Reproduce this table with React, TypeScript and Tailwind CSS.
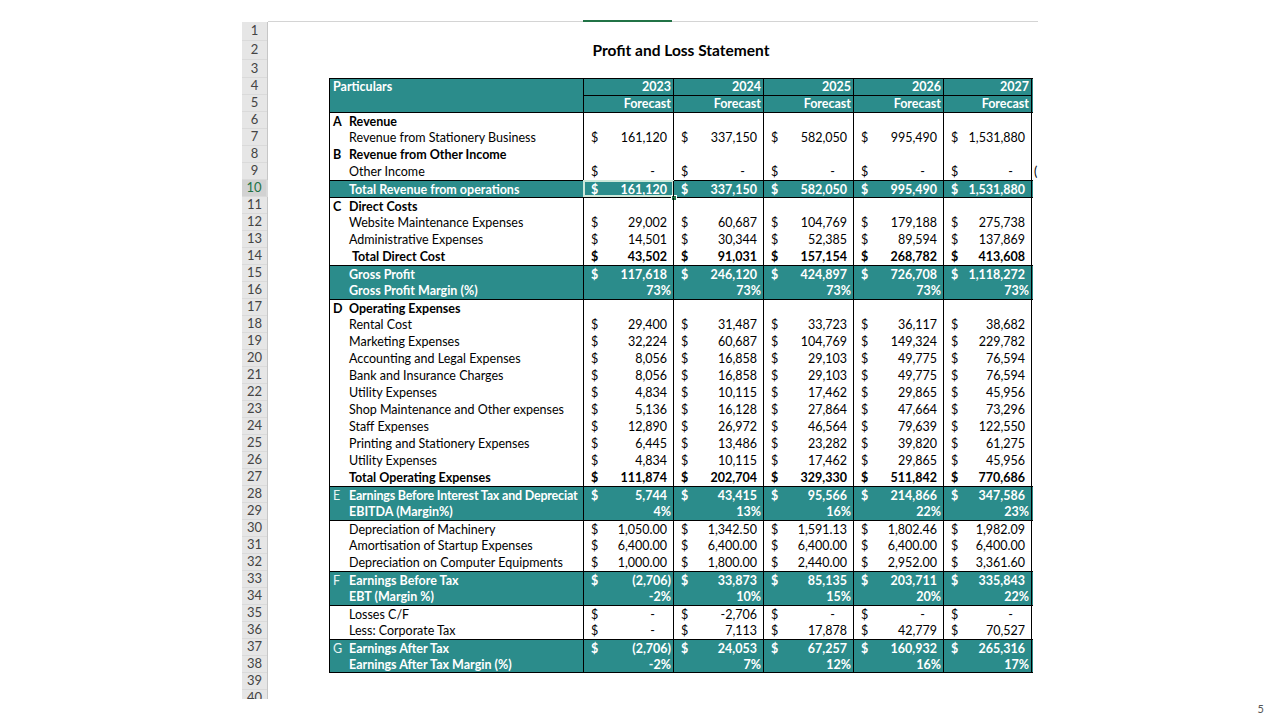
import React from "react";

type Kind = "normal" | "bold" | "section" | "teal";
type Row = {
  n: number;
  letter?: string;
  label: string;
  vals?: string[];
  kind?: Kind;
  top?: boolean;
  bottom?: boolean;
  indent?: boolean;
  pct?: boolean;
  sel?: boolean;
  tight?: boolean;
  overflow?: string;
};

const rows: Row[] = [
  { n: 6, letter: "A", label: "Revenue", kind: "section", top: true },
  { n: 7, label: "Revenue from Stationery Business", vals: ["161,120", "337,150", "582,050", "995,490", "1,531,880"] },
  { n: 8, letter: "B", label: "Revenue from Other Income", kind: "section" },
  { n: 9, label: "Other Income", vals: ["-", "-", "-", "-", "-"], overflow: "(" },
  { n: 10, label: "Total Revenue from operations", kind: "teal", top: true, sel: true, vals: ["161,120", "337,150", "582,050", "995,490", "1,531,880"] },
  { n: 11, letter: "C", label: "Direct Costs", kind: "section", top: true },
  { n: 12, label: "Website Maintenance Expenses", vals: ["29,002", "60,687", "104,769", "179,188", "275,738"] },
  { n: 13, label: "Administrative Expenses", vals: ["14,501", "30,344", "52,385", "89,594", "137,869"] },
  { n: 14, label: "Total Direct Cost", kind: "bold", indent: true, vals: ["43,502", "91,031", "157,154", "268,782", "413,608"] },
  { n: 15, label: "Gross Profit", kind: "teal", top: true, vals: ["117,618", "246,120", "424,897", "726,708", "1,118,272"] },
  { n: 16, label: "Gross Profit Margin (%)", kind: "teal", pct: true, vals: ["73%", "73%", "73%", "73%", "73%"] },
  { n: 17, letter: "D", label: "Operating Expenses", kind: "section", top: true },
  { n: 18, label: "Rental Cost", vals: ["29,400", "31,487", "33,723", "36,117", "38,682"] },
  { n: 19, label: "Marketing Expenses", vals: ["32,224", "60,687", "104,769", "149,324", "229,782"] },
  { n: 20, label: "Accounting and Legal Expenses", vals: ["8,056", "16,858", "29,103", "49,775", "76,594"] },
  { n: 21, label: "Bank and Insurance Charges", vals: ["8,056", "16,858", "29,103", "49,775", "76,594"] },
  { n: 22, label: "Utility Expenses", vals: ["4,834", "10,115", "17,462", "29,865", "45,956"] },
  { n: 23, label: "Shop Maintenance and Other expenses", vals: ["5,136", "16,128", "27,864", "47,664", "73,296"] },
  { n: 24, label: "Staff Expenses", vals: ["12,890", "26,972", "46,564", "79,639", "122,550"] },
  { n: 25, label: "Printing and Stationery Expenses", vals: ["6,445", "13,486", "23,282", "39,820", "61,275"] },
  { n: 26, label: "Utility Expenses", vals: ["4,834", "10,115", "17,462", "29,865", "45,956"] },
  { n: 27, label: "Total Operating Expenses", kind: "bold", vals: ["111,874", "202,704", "329,330", "511,842", "770,686"] },
  { n: 28, letter: "E", label: "Earnings Before Interest Tax and Depreciat", kind: "teal", top: true, tight: true, vals: ["5,744", "43,415", "95,566", "214,866", "347,586"] },
  { n: 29, label: "EBITDA (Margin%)", kind: "teal", pct: true, vals: ["4%", "13%", "16%", "22%", "23%"] },
  { n: 30, label: "Depreciation of Machinery", top: true, vals: ["1,050.00", "1,342.50", "1,591.13", "1,802.46", "1,982.09"] },
  { n: 31, label: "Amortisation of Startup Expenses", vals: ["6,400.00", "6,400.00", "6,400.00", "6,400.00", "6,400.00"] },
  { n: 32, label: "Depreciation on Computer Equipments", vals: ["1,000.00", "1,800.00", "2,440.00", "2,952.00", "3,361.60"] },
  { n: 33, letter: "F", label: "Earnings Before Tax", kind: "teal", top: true, vals: ["(2,706)", "33,873", "85,135", "203,711", "335,843"] },
  { n: 34, label: "EBT (Margin %)", kind: "teal", pct: true, vals: ["-2%", "10%", "15%", "20%", "22%"] },
  { n: 35, label: "Losses C/F", top: true, vals: ["-", "-2,706", "-", "-", "-"] },
  { n: 36, label: "Less: Corporate Tax", vals: ["-", "7,113", "17,878", "42,779", "70,527"] },
  { n: 37, letter: "G", label: "Earnings After Tax", kind: "teal", top: true, vals: ["(2,706)", "24,053", "67,257", "160,932", "265,316"] },
  { n: 38, label: "Earnings After Tax Margin (%)", kind: "teal", pct: true, bottom: true, vals: ["-2%", "7%", "12%", "16%", "17%"] },
];

const yearW = ["w-[90px]", "w-[90px]", "w-[90px]", "w-[90px]", "w-[89px]"];

function valPad(v: string) {
  if (v === "-") return "pr-[18px]";
  if (v.startsWith("(") || v.endsWith("%")) return "pr-[2px]";
  return "pr-[6px]";
}

function TableRow({ r }: { r: Row }) {
  const teal = r.kind === "teal";
  const bold = r.kind !== "normal" && r.kind !== undefined;
  return (
    <div
      className={`flex h-[17px] leading-[17px] ${teal ? "bg-[#2b8c8b] text-white" : "text-black"} ${
        r.top ? "border-t border-black leading-[16px]" : ""
      } ${r.bottom ? "border-b border-black" : ""}`}
    >
      <div className="w-[254px] border-l border-black flex overflow-hidden whitespace-nowrap">
        <span
          className={`w-[19px] shrink-0 pl-[3px] ${
            teal ? "text-[#e8f4f4] font-normal" : r.kind === "section" ? "font-bold" : ""
          }`}
        >
          {r.letter ?? ""}
        </span>
        <span
          className={`${bold ? "font-bold" : ""} ${r.indent ? "pl-[3px]" : ""} ${
            r.tight ? "tracking-[-0.2px]" : ""
          }`}
        >
          {r.label}
        </span>
      </div>
      {yearW.map((w, i) => {
        const v = r.vals?.[i];
        return (
          <div
            key={i}
            className={`${w} relative border-l border-black ${i === 4 ? "border-r" : ""} flex justify-between whitespace-nowrap`}
          >
            {v !== undefined ? (
              <>
                <span className={`pl-[7px] ${bold ? "font-bold" : ""}`}>{r.pct ? "" : "$"}</span>
                <span className={`${valPad(v)} ${bold ? "font-bold" : ""}`}>{v}</span>
              </>
            ) : null}
            {r.sel && i === 0 ? (
              <>
                <div className="absolute inset-x-[-1px] top-[-1px] bottom-0 border-2 border-[#cde8da]" />
                <div className="absolute right-[-4px] bottom-[-4px] w-[6px] h-[6px] bg-[#217346] border border-white" />
              </>
            ) : null}
            {r.overflow && i === 4 ? (
              <span className="absolute left-full ml-[3px] text-black">{r.overflow}</span>
            ) : null}
          </div>
        );
      })}
    </div>
  );
}

export default function App() {
  const rowNums: { n: number; h: string }[] = [];
  for (let i = 1; i <= 40; i++) {
    rowNums.push({ n: i, h: i === 1 || i === 2 ? "h-[19px]" : i === 3 ? "h-[18px]" : "h-[17px]" });
  }
  return (
    <div
      className="w-[1280px] h-[720px] bg-white overflow-hidden text-[12.5px]"
      style={{ fontFamily: "Lato, 'Open Sans', sans-serif" }}
    >
      <div className="h-[699px] overflow-hidden">
        <div className="h-[22px] pl-[268px] flex items-end">
          <div className="w-[770px] h-[1px] bg-[#d4d4d4] flex">
            <div className="ml-[315px] w-[89px] h-[2px] -mt-[1px] bg-[#217346]" />
          </div>
        </div>
        <div className="flex pl-[242px]">
          <div className="w-[26px] bg-[#e6e6e6] border-r border-[#c6c6c6] flex flex-col">
            {rowNums.map((r) => (
              <div
                key={r.n}
                className={`${r.h} shrink-0 flex items-center justify-center text-[13px] ${
                  r.n === 10 ? "bg-[#d2d2d2] text-[#217346] border-r-2 border-[#217346] -mr-[1px]" : "text-[#444]"
                } border-b border-[#dadada]`}
              >
                {r.n}
              </div>
            ))}
          </div>
          <div className="flex flex-col">
            <div className="h-[19px]" />
            <div className="h-[19px] flex items-center pl-[61px]">
              <div className="w-[704px] text-center font-bold text-[15.5px] text-black">Profit and Loss Statement</div>
            </div>
            <div className="h-[18px]" />
            <div className="ml-[61px] w-[704px]">
              <div className="flex h-[17px] leading-[16px] bg-[#2b8c8b] text-white font-bold border-t border-black">
                <div className="w-[254px] border-l border-black pl-[3px]">Particulars</div>
                {yearW.map((w, i) => (
                  <div key={i} className={`${w} border-l border-black ${i === 4 ? "border-r" : ""} text-right pr-[2px]`}>
                    {2023 + i}
                  </div>
                ))}
              </div>
              <div className="flex h-[17px] leading-[16px] bg-[#2b8c8b] text-white font-bold">
                <div className="w-[254px] border-l border-black" />
                {yearW.map((w, i) => (
                  <div
                    key={i}
                    className={`${w} border-l border-t border-black ${i === 4 ? "border-r" : ""} text-right pr-[2px]`}
                  >
                    Forecast
                  </div>
                ))}
              </div>
              {rows.map((r) => (
                <TableRow key={r.n} r={r} />
              ))}
            </div>
          </div>
        </div>
      </div>
      <div className="h-[21px] flex items-center justify-end pr-[16px] text-[11px] text-[#555]">5</div>
    </div>
  );
}
